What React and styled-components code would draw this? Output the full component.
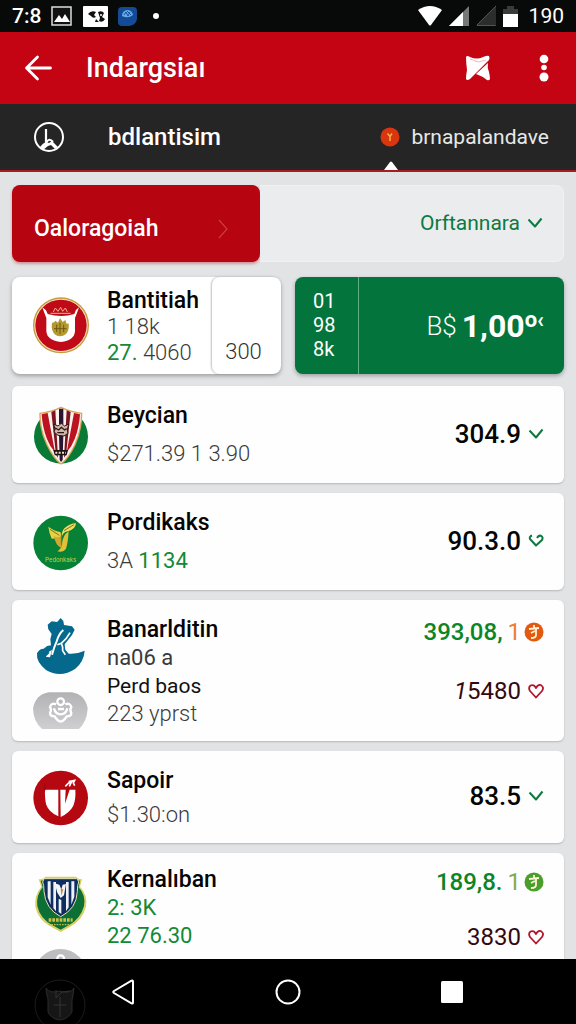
import { useState } from "react";
import styled, { createGlobalStyle } from "styled-components";

const App = () => {
  const [saved, setSaved] = useState({});

  const toggle = (key) => setSaved((prev) => ({ ...prev, [key]: !prev[key] }));

  return (
    <Screen>
      <GlobalStyle />
      <StatusBar>
        <StatusGroup>
          <Clock>7:8</Clock>
          <PictureIcon />
          <ContactIcon />
          <BadgeIcon />
          <Dot />
        </StatusGroup>
        <StatusGroup $tight>
          <WifiIcon />
          <SignalIcon />
          <SignalIcon dim />
          <BatteryIcon />
          <Clock $light>190</Clock>
        </StatusGroup>
      </StatusBar>

      <AppBar>
        <IconButton aria-label="Back">
          <BackIcon />
        </IconButton>
        <Title>Indargsiaı</Title>
        <IconButton aria-label="Pin">
          <PinIcon />
        </IconButton>
        <IconButton aria-label="More">
          <MoreIcon />
        </IconButton>
      </AppBar>

      <Tabs>
        <Tab>
          <ClockIcon />
          bdlantisim
        </Tab>
        <Tab $active>
          <CoinIcon />
          brnapalandave
          <Caret viewBox="0 0 14 9" aria-hidden="true">
            <path d="M0 9 6 1q1-1 2 0l6 8z" fill="#fff" />
          </Caret>
        </Tab>
      </Tabs>

      <Content>
        <Filters>
          <Primary>
            Oaloragoiah
            <svg width="12" height="20" viewBox="0 0 12 20" fill="none">
              <path d="M2 1l8 9-8 9" stroke="#cf3a45" strokeWidth="1.2" />
            </svg>
          </Primary>
          <SelectBox>
            <Select aria-label="Order" defaultValue="a">
              <option value="a">Orftannara</option>
            </Select>
            <CheckIcon color="#0b7a43" />
          </SelectBox>
        </Filters>

        <Highlights>
          <Summary>
            <SummaryMain>
              <CrestCrown />
              <Info>
                <Name>Bantitiah</Name>
                <Sub>1 18k</Sub>
                <Sub>
                  <Green>27.</Green> 4060
                </Sub>
              </Info>
            </SummaryMain>
            <SummarySide>300</SummarySide>
          </Summary>
          <Offer>
            <OfferSide>
              <span>01</span>
              <span>98</span>
              <span>8k</span>
            </OfferSide>
            <OfferPrice>
              <Currency>B$</Currency>
              <Amount>1,00</Amount>
              <Raised>o‹</Raised>
            </OfferPrice>
          </Offer>
        </Highlights>

        <List>
          <Card $roomy>
            <CrestStriped />
            <Info $gap={10}>
              <Name>Beycian</Name>
              <Sub>$271.39 1 3.90</Sub>
            </Info>
            <Values>
              <Value>
                304.9
                <Toggle label="Beycian" name="a" saved={saved} onToggle={toggle}>
                  <CheckIcon color="#0b7a3c" />
                </Toggle>
              </Value>
            </Values>
          </Card>

          <Card $roomy>
            <CrestLeaf />
            <Info $gap={10}>
              <Name>Pordikaks</Name>
              <Sub>
                3A <Green>1134</Green>
              </Sub>
            </Info>
            <Values>
              <Value>
                90.3.0
                <Toggle label="Pordikaks" name="b" saved={saved} onToggle={toggle}>
                  <CheckIcon color="#0b7a3c" curl />
                </Toggle>
              </Value>
            </Values>
          </Card>

          <Card>
            <Crests>
              <CrestSwan />
              <CrestGrey />
            </Crests>
            <Info>
              <Name>Banarlditin</Name>
              <Sub $dark>na06 a</Sub>
              <Second>Perd baos</Second>
              <Sub>223 yprst</Sub>
            </Info>
            <Values $top $gap={31}>
              <Value $tone="green">
                393,08, <Orange>1</Orange>
                <TokenIcon color="#e2590f" />
              </Value>
              <Value $tone="wine">
                <span>
                  <i>1</i>5480
                </span>
                <Toggle label="Perd baos" name="c" saved={saved} onToggle={toggle}>
                  <HeartIcon />
                </Toggle>
              </Value>
            </Values>
          </Card>

          <Card>
            <CrestShield />
            <Info $gap={6}>
              <Name>Sapoir</Name>
              <Sub>$1.30:on</Sub>
            </Info>
            <Values>
              <Value>
                83.5
                <Toggle label="Sapoir" name="d" saved={saved} onToggle={toggle}>
                  <CheckIcon color="#0b7a3c" />
                </Toggle>
              </Value>
            </Values>
          </Card>

          <Card $snug>
            <Crests $low>
              <CrestBlue />
              <CrestGrey round />
            </Crests>
            <Info>
              <Name>Kernalıban</Name>
              <Sub $dark>
                <Green>2: 3K</Green>
              </Sub>
              <Sub $dark>
                <Green>22 76.30</Green>
              </Sub>
            </Info>
            <Values $top $gap={27}>
              <Value $tone="green">
                189,8. <Lime>1</Lime>
                <TokenIcon color="#4a9f2c" />
              </Value>
              <Value $tone="wine">
                3830
                <Toggle label="Kernalıban" name="e" saved={saved} onToggle={toggle}>
                  <HeartIcon />
                </Toggle>
              </Value>
            </Values>
          </Card>
        </List>
      </Content>

      <NavBar>
        <Ghost viewBox="0 0 52 52" aria-hidden="true">
          <circle cx="26" cy="26" r="25" fill="none" stroke="#1c1c1c" />
          <path
            d="M12 9q4 6 14 3 9 4 14-3-1 8-2 12v12q-4 7-12 8-9-1-12-8V20q-2-5-2-11z"
            fill="#161616"
            stroke="#2b2b2b"
          />
          <path d="M22 11v8l6-6 8-1M26 18v20M20 26h12" stroke="#333" fill="none" />
        </Ghost>
        <NavButton aria-label="Back">
          <svg width="26" height="28" viewBox="0 0 26 28" fill="none">
            <path
              d="M22 3.500v21q0 1.500-1.500.8L3 15q-1.500-1 0-2L20.500 2.700q1.500-.7 1.500.8z"
              stroke="#fff"
              strokeWidth="2"
            />
          </svg>
        </NavButton>
        <NavButton aria-label="Home">
          <svg width="26" height="26" viewBox="0 0 26 26" fill="none">
            <circle cx="13" cy="13" r="11.500" stroke="#fff" strokeWidth="2" />
          </svg>
        </NavButton>
        <NavButton aria-label="Recent">
          <svg width="22" height="22" viewBox="0 0 22 22">
            <rect width="22" height="22" rx="1.500" fill="#fff" />
          </svg>
        </NavButton>
      </NavBar>
    </Screen>
  );
};

export default App;

const Toggle = ({ label, name, saved, onToggle, children }) => (
  <MarkButton
    aria-label={label}
    aria-pressed={!!saved[name]}
    onClick={() => onToggle(name)}
  >
    {children}
  </MarkButton>
);

/* icons */

const PictureIcon = () => (
  <svg width="22" height="20" viewBox="0 0 22 20">
    <rect x="1" y="1" width="19" height="18" fill="#111" stroke="#ddd" strokeWidth="1.500" />
    <path d="M3 16l5-7 3 4 3-5 5 8z" fill="#fff" />
  </svg>
);

const ContactIcon = () => (
  <svg width="25" height="21" viewBox="0 0 25 21">
    <rect width="25" height="21" rx="1" fill="#fff" />
    <path
      d="M5 8q3-4 8-2l-2 3 2 2q-3 2-5-1zM15 6q4-2 6 1l-2 4 3 2q-2 4-6 2l1-3zM13 13l3 3h-4z"
      fill="#111"
    />
    <circle cx="18" cy="9" r="1" fill="#fff" />
  </svg>
);

const BadgeIcon = () => (
  <svg width="19" height="19" viewBox="0 0 19 19">
    <path d="M4 0h11q4 0 4 4v8q-1 6-8 7H4q-4 0-4-4V4q0-4 4-4z" fill="#134b96" />
    <path d="M4 9q0-5 5-6 5 0 6 5-5 4-11 1z" fill="#68a9e6" />
    <path d="M6 8l2-3 2 4 2-4M9 4l4 4" stroke="#174f9c" fill="none" />
  </svg>
);

const WifiIcon = () => (
  <svg width="24" height="20" viewBox="0 0 24 20">
    <path d="M0 4q12-8 24 0L13 19q-1 1-2 0z" fill="#fff" />
  </svg>
);

const SignalIcon = ({ dim }) => (
  <svg width="20" height="20" viewBox="0 0 20 20">
    <path d="M0 20L20 0v20z" fill={dim ? "#2c2c2c" : "#777"} />
    {dim ? (
      <path d="M1 19.500h18.500M1 19L20 0" stroke="#555" fill="none" />
    ) : (
      <path d="M0 20L14 6v14z" fill="#fff" />
    )}
  </svg>
);

const BatteryIcon = () => (
  <svg width="15" height="21" viewBox="0 0 15 21">
    <path d="M0 3h4V0h7v3h4v6H0z" fill="#3a3a3a" />
    <path d="M0 8h15v13H0z" fill="#fff" />
  </svg>
);

const BackIcon = () => (
  <svg width="28" height="28" viewBox="0 0 28 28" fill="none">
    <path
      d="M13.500 3L2.500 14l11 11M3 14h23.500"
      stroke="#fff"
      strokeWidth="2.800"
      strokeLinecap="round"
      strokeLinejoin="round"
    />
  </svg>
);

const PinIcon = () => (
  <svg width="26" height="26" viewBox="0 0 26 26">
    <path
      d="M1 2q1-2 4 0 7 3 13 0 5-2 6-1 1 2 0 4L5 24q-3 2-4 0 0-4 1-9-1-8-1-13z"
      fill="#fff"
    />
    <path d="M23 8q-1 5 1 9 1 5 1 7-1 2-3 1-5-4-11-6z" fill="#fff" />
    <path d="M5 4l8 3 8-2" stroke="#f3b9bd" fill="none" />
  </svg>
);

const MoreIcon = () => (
  <svg width="10" height="28" viewBox="0 0 10 28" fill="#fff">
    <circle cx="5" cy="5" r="4.300" />
    <circle cx="5" cy="13.500" r="2.800" />
    <circle cx="5" cy="23" r="4.500" />
  </svg>
);

const ClockIcon = () => (
  <svg width="32" height="32" viewBox="0 0 32 32" fill="none">
    <circle cx="16" cy="16" r="14" stroke="#fff" strokeWidth="2" />
    <path d="M13 8v14q3-6 7-1" stroke="#fff" strokeWidth="2.200" />
    <path d="M7 26q3-4 6-5l3 1 3-2 6 6-3 2-4-4-3 1-5 4z" fill="#fff" />
  </svg>
);

const CoinIcon = () => (
  <svg width="20" height="20" viewBox="0 0 20 20">
    <circle cx="10" cy="10" r="9.500" fill="#d9350f" />
    <path d="M7.500 6.500l2.500 3 2-3M10 9v5" stroke="#f5b34c" strokeWidth="1.500" fill="none" />
  </svg>
);

const CheckIcon = ({ color, curl }) => (
  <svg width="16" height="14" viewBox="0 0 16 14" fill="none">
    <path
      d={
        curl
          ? "M4 1.500Q1 2.500 2 5l6 6.500L14 6q1.500-3-1-4.200Q10.500 1 9 4"
          : "M1.500 3.500L8 10.500l6.500-8"
      }
      stroke={color}
      strokeWidth="2"
      strokeLinejoin="round"
    />
  </svg>
);

const HeartIcon = () => (
  <svg width="16" height="16" viewBox="0 0 16 16" fill="none">
    <path
      d="M8 14.500L2 8Q0 4.500 2.500 2.500 6 1 8 5q2-4 5-2.800 3.500 2 1 5.800z"
      stroke="#b3142b"
      strokeWidth="1.800"
      strokeLinejoin="round"
    />
  </svg>
);

const TokenIcon = ({ color }) => (
  <svg width="20" height="20" viewBox="0 0 20 20">
    <circle cx="10" cy="10" r="9.500" fill={color} />
    <path
      d="M5 7l10-1M10 3v4M12 7v6q0 3-5 3M7 11l4-2"
      stroke="#fff3d6"
      strokeWidth="1.800"
      fill="none"
    />
  </svg>
);

/* club crests */

const CrestCrown = () => (
  <Crest viewBox="99 364 168 168">
    <circle cx="183" cy="446" r="84" fill="#c79a3d" />
    <circle cx="183" cy="446" r="80" fill="#f5e3c0" />
    <circle cx="183" cy="446" r="77" fill="#c00a18" />
    <path
      d="M127 392q14 16 56 16t54-16q-6 18-12 32v40q-2 28-42 32-42-4-44-32v-40q-6-14-12-32z"
      fill="#fff"
    />
    <path d="M134 392q20 12 49 10 27 2 48-10l-8 20q-38 12-80 0z" fill="#b50f17" />
    <path
      d="M160 406l6-12 8 10 8-12 6 12 8-10 6 12M152 410h60"
      stroke="#f0b48a"
      strokeWidth="3"
      fill="none"
    />
    <path
      d="M156 438q6 2 10-6l8 6 6-14 8 12 8-6 4 12 6-2q2 22-8 32-16 12-32 2-14-12-10-36z"
      fill="#b49a2e"
    />
    <path d="M170 444v22M180 438v34M191 444v22M162 456h38" stroke="#6f5a12" strokeWidth="3" />
  </Crest>
);

const CrestStriped = () => (
  <Crest viewBox="99 64 168 168">
    <circle cx="183" cy="150" r="81" fill="#087a35" />
    <path
      d="M120 80q34-4 63-18 29 14 62 18 0 50-20 94-20 42-42 58-22-16-42-58-22-44-21-94z"
      fill="#fbf3ec"
      stroke="#d8a55c"
      strokeWidth="4"
    />
    <path d="M125 83l18-4 22 118q-16-18-24-40-14-36-16-74z" fill="#bb1420" />
    <path d="M240 83l-18-4-22 118q16-18 24-40 14-36 16-74z" fill="#bb1420" />
    <path d="M154 76l12-5 8 142-6-8zM212 76l-12-5-8 142 6-8z" fill="#7d1220" />
    <path d="M177 66h13v46h-13zM177 146h13l-2 74-5 6-4-6z" fill="#2a1530" />
    <path
      d="M160 112l14 6 10-8 10 8 12-6-4 18 2 10-12 8-18-2-12-10 4-10z"
      fill="#cdb7a4"
      stroke="#2b1518"
      strokeWidth="3"
    />
    <path d="M166 124l10 6 8-8 10 8 6-4M172 138h20" stroke="#2b1518" strokeWidth="4" fill="none" />
    <path d="M160 190h44l-4 16h-36z" fill="#1f1114" />
    <path d="M166 198h32" stroke="#e9dccb" strokeWidth="6" strokeDasharray="6 4" />
  </Crest>
);

const CrestLeaf = () => (
  <Crest viewBox="99 387 168 168">
    <circle cx="182" cy="471" r="82" fill="#078136" />
    <path d="M145 422q20 14 36 16 6 8 2 18l-28 2q-8-18-10-36z" fill="#e8cf45" />
    <path d="M228 412q-2 18-24 24-14 2-18 14-2-14 8-24 16-14 34-14z" fill="#f0dc62" />
    <path d="M206 436q-2 34-8 52-8 12-26 8 12-6 14-22 2-26 20-38z" fill="#e2c13a" />
    <path d="M162 450q10 8 22 0v36q-18-8-22-36z" fill="#d0a92e" />
    <path d="M184 442v34M150 430l28 18M192 434l30-18" stroke="#8a7317" strokeWidth="3" />
    <text
      x="182"
      y="527"
      textAnchor="middle"
      fontFamily="Roboto, sans-serif"
      fontSize="19"
      fill="#b7cf4e"
    >
      Pedonkaks
    </text>
  </Crest>
);

const CrestSwan = () => (
  <Crest viewBox="99 72 168 168">
    <path
      d="M182 72l8 9 2 12 24 4 8 10-8 16-22 28 2 16 10 12q24 2 48-9-2 32-28 54-44 30-88 4-30-24-27-50 6-14 20-14 10-10 22-10l-2-18 4-16-10-14-2-14 12-10 16 2 4-4z"
      fill="#04698c"
    />
    <path
      d="M190 108q-14 12-20 34-8 18-14 40"
      fill="none"
      stroke="#fff"
      strokeWidth="6"
    />
    <path d="M210 116q-10 20-28 34M172 152l12-4q6 12 4 22l8 12" fill="none" stroke="#fff" strokeWidth="5" />
    <path d="M136 188q8-16 20-20l-6 22z" fill="#fff" />
    <path d="M146 174q-10 8-14 18 10 8 26 4" fill="none" stroke="#04698c" strokeWidth="7" />
  </Crest>
);

const CrestGrey = ({ round }) => (
  <GreyCrest viewBox="99 297 168 111" fill="none">
    <defs>
      <linearGradient id="ash" x1="0" y1="0" x2="0" y2="1">
        <stop offset="0" stopColor="#b2b2b4" />
        <stop offset="1" stopColor="#cfcfd1" />
      </linearGradient>
    </defs>
    {round ? (
      <circle cx="181" cy="378" r="81" fill="#bdbdbf" />
    ) : (
      <path
        d="M147 298h68q40 6 48 48-2 40-26 62H126q-26-22-27-62 8-42 48-48z"
        fill="url(#ash)"
      />
    )}
    <circle cx="182" cy="326" r="10" stroke="#fff" strokeWidth="7" />
    <path
      d="M168 334q-14-6-18 8 6 8 0 18 0 10 14 10 8 14 18 16 10-2 18-16 14 0 14-10-6-10 0-18-4-14-18-8M162 346q4 18 20 18t20-18M174 348h18"
      stroke="#fff"
      strokeWidth="7"
    />
  </GreyCrest>
);

const CrestShield = () => (
  <Crest viewBox="99 69 168 168">
    <circle cx="182" cy="153" r="82" fill="#b60811" />
    <path d="M135 128h40v80q-28-12-36-34-5-18-4-46z" fill="#fff" />
    <path d="M181 128h16l-2 42 14-42h17q2 28-6 48-10 20-38 34z" fill="#fff" />
    <path
      d="M196 118l10-10 8-2-6 12M206 104l18-4-4 8 4 8"
      stroke="#fff"
      strokeWidth="5"
      fill="none"
    />
    <path d="M135 110v20" stroke="#8d050c" strokeWidth="3" />
  </Crest>
);

const CrestBlue = () => (
  <Crest viewBox="99 76 168 168">
    <path
      d="M116 86q14 0 20-8h92q6 8 18 8l-6 22q24 26 18 60-10 40-50 62l-26 14-26-14q-42-22-50-62-4-34 18-60z"
      fill="#d9cf62"
    />
    <path
      d="M122 90q12 0 18-6h84q6 6 16 6l-4 20q22 24 16 56-10 38-46 58l-24 13-24-13q-38-20-46-58-4-32 16-56z"
      fill="#0c6f35"
    />
    <path
      d="M132 84h100l4 10q-4 8-4 28-2 52-50 76-46-24-50-76 0-20-4-28z"
      fill="#102d5f"
      stroke="#e9e2b0"
      strokeWidth="3"
    />
    <path
      d="M143 92h9v70l-9-22zM160 94h8v88l-8-10zM198 94h8v76l-8 12zM214 92h9v46l-9 24z"
      fill="#eef2f7"
    />
    <path d="M164 98l14 4 6 14 4-14 10-2-6 34-10 8-10-16z" fill="#f3f4f6" />
    <path d="M182 114l8 2-6 20z" fill="#cf8b33" />
    <path d="M176 144l8 4v42l-8-6z" fill="#eef2f7" />
    <path d="M146 208h72" stroke="#cfc043" strokeWidth="10" strokeDasharray="8 3" />
    <path d="M146 222h64" stroke="#b9b84a" strokeWidth="4" strokeDasharray="5 3" />
  </Crest>
);

/* styles */

const GlobalStyle = createGlobalStyle`
  * {
    box-sizing: border-box;
  }

  body {
    margin: 0;
    font-family: Roboto, "Liberation Sans", sans-serif;
    background-color: #000;
  }

  button,
  select {
    font-family: inherit;
    border: none;
    background: none;
    padding: 0;
    cursor: pointer;
  }

  svg {
    display: block;
    flex-shrink: 0;
  }
`;

const Screen = styled.div`
  display: flex;
  flex-direction: column;
  height: 100vh;
`;

const StatusBar = styled.div`
  display: flex;
  align-items: center;
  justify-content: space-between;
  height: 32px;
  padding: 0 12px;
  background-color: #070a09;
  flex-shrink: 0;
`;

const StatusGroup = styled.div`
  display: flex;
  align-items: center;
  gap: ${(props) => (props.$tight ? "7px" : "10px")};
`;

const Clock = styled.span`
  font-size: 21px;
  line-height: 24px;
  font-weight: ${(props) => (props.$light ? 400 : 500)};
  color: #fff;
  margin-left: ${(props) => (props.$light ? "4px" : 0)};
`;

const Dot = styled.span`
  width: 6px;
  height: 6px;
  margin-left: 6px;
  border-radius: 50%;
  background-color: #fff;
`;

const AppBar = styled.header`
  display: flex;
  align-items: center;
  gap: 48px;
  height: 72px;
  padding: 0 27px 0 24px;
  background-color: #c40412;
  flex-shrink: 0;
`;

const IconButton = styled.button`
  display: flex;
`;

const Title = styled.h1`
  flex: 1;
  margin: 0 0 0 -14px;
  font-size: 27px;
  line-height: 32px;
  font-weight: 500;
  color: #fff;
`;

const Tabs = styled.nav`
  display: flex;
  justify-content: space-between;
  height: 68px;
  padding: 0 27px 0 33px;
  background-color: #252525;
  border-bottom: 2px solid #a51c22;
  flex-shrink: 0;
`;

const Tab = styled.button`
  position: relative;
  display: flex;
  align-items: center;
  gap: ${(props) => (props.$active ? "11px" : "43px")};
  font-size: ${(props) => (props.$active ? "21px" : "24px")};
  line-height: 28px;
  font-weight: ${(props) => (props.$active ? 400 : 500)};
  color: ${(props) => (props.$active ? "#e8e8e8" : "#fff")};
`;

const Caret = styled.svg`
  position: absolute;
  left: 4px;
  bottom: 0;
  width: 14px;
  height: 9px;
`;

const Content = styled.main`
  flex: 1;
  min-height: 0;
  padding: 13px 12px 0;
  overflow-y: auto;
  scrollbar-width: none;
  background-color: #e2e3e5;
`;

const Filters = styled.div`
  display: grid;
  grid-template-columns: 9fr 11fr;
  height: 77px;
  margin-bottom: 15px;
`;

const Primary = styled.button`
  display: flex;
  align-items: center;
  justify-content: space-between;
  padding: 10px 31px 0 22px;
  border-radius: 8px;
  background-color: #b60410;
  box-shadow: 0 2px 3px rgba(160, 0, 10, 0.35);
  font-size: 23px;
  line-height: 28px;
  font-weight: 500;
  color: #fff;
`;

const SelectBox = styled.div`
  display: flex;
  align-items: center;
  justify-content: flex-end;
  gap: 7px;
  padding: 0 20px 2px 0;
  border: 1px solid #f0f1f2;
  border-left: none;
  border-radius: 0 8px 8px 0;
  background-color: #ebecee;
`;

const Select = styled.select`
  appearance: none;
  field-sizing: content;
  font-size: 21px;
  line-height: 28px;
  color: #0b7a43;
`;

const Highlights = styled.div`
  display: grid;
  grid-template-columns: 1fr 1fr;
  gap: 14px;
  margin-bottom: 12px;
`;

const Summary = styled.article`
  display: flex;
  border-radius: 8px;
  background-color: #fff;
  box-shadow: 0 2px 4px rgba(0, 0, 0, 0.3);
`;

const SummaryMain = styled.div`
  display: flex;
  align-items: center;
  gap: 18px;
  flex: 1;
  padding: 0 0 0 21px;
`;

const SummarySide = styled.div`
  display: flex;
  align-items: flex-end;
  justify-content: center;
  width: 69px;
  padding: 0 6px 8px 0;
  border-radius: 8px;
  box-shadow: -1px 0 2px rgba(0, 0, 0, 0.25);
  font-size: 22px;
  line-height: 28px;
  font-weight: 300;
  color: #333;
`;

const Offer = styled.article`
  display: flex;
  border-radius: 8px;
  background-color: #03743c;
  box-shadow: 0 2px 4px rgba(0, 0, 0, 0.3);
  color: #fff;
`;

const OfferSide = styled.div`
  display: flex;
  flex-direction: column;
  width: 64px;
  padding: 12px 0 13px 18px;
  border-right: 1px solid #5fae84;
  font-size: 20px;
  line-height: 24px;
`;

const OfferPrice = styled.div`
  display: flex;
  align-items: center;
  justify-content: flex-end;
  flex: 1;
  padding-right: 20px;
  line-height: 36px;
`;

const Currency = styled.span`
  margin-right: 5px;
  font-size: 26px;
  font-weight: 300;
`;

const Amount = styled.strong`
  font-size: 32px;
  font-weight: 700;
`;

const Raised = styled.sup`
  padding-bottom: 12px;
  font-size: 22px;
  line-height: 24px;
  font-weight: 700;
`;

const List = styled.div`
  display: flex;
  flex-direction: column;
  gap: 10px;
`;

const Card = styled.article`
  display: flex;
  align-items: center;
  gap: 18px;
  min-height: ${(props) => (props.$roomy ? "97px" : "92px")};
  padding: ${(props) => (props.$snug ? "11px" : "14px")} 20px 12px 21px;
  border-radius: 6px;
  background-color: #fefefe;
  box-shadow: 0 1px 2px rgba(0, 0, 0, 0.2);
`;

const Crests = styled.div`
  display: flex;
  flex-direction: column;
  align-self: flex-start;
  gap: ${(props) => (props.$low ? "17px" : "18px")};
  padding-top: ${(props) => (props.$low ? "12px" : "4px")};
`;

const Crest = styled.svg`
  width: 56px;
  height: 56px;
  overflow: visible;
`;

const GreyCrest = styled.svg`
  width: 56px;
  height: 37px;
`;

const Info = styled.div`
  display: flex;
  flex-direction: column;
  align-self: flex-start;
  gap: ${(props) => props.$gap || 0}px;
  white-space: nowrap;

  ${SummaryMain} & {
    padding: 11px 0 8px;
    line-height: 26px;
  }

  ${Card} & {
    padding-top: 2px;
    line-height: 28px;
  }
`;

const Name = styled.h2`
  margin: 0;
  font-size: 23px;
  line-height: inherit;
  font-weight: 500;
  color: #050505;
`;

const Second = styled.h3`
  margin: 0;
  font-size: 21px;
  line-height: inherit;
  font-weight: 400;
  color: #111;
`;

const Sub = styled.p`
  margin: 0;
  font-size: 22px;
  line-height: inherit;
  font-weight: ${(props) => (props.$dark ? 400 : 300)};
  color: #3a3a3a;
`;

const Green = styled.span`
  font-weight: 400;
  color: #128a35;
`;

const Orange = styled.span`
  margin-left: 2px;
  font-weight: 400;
  color: #e88236;
`;

const Lime = styled(Orange)`
  color: #84ab4c;
`;

const Values = styled.div`
  display: flex;
  flex-direction: column;
  align-items: flex-end;
  align-self: ${(props) => (props.$top ? "flex-start" : "center")};
  gap: ${(props) => props.$gap || 0}px;
  flex: 1;
  padding: ${(props) => (props.$top ? "4px 0 0" : "0 0 4px")};
`;

const tones = {
  green: "#0c8526",
  wine: "#35080e",
};

const Value = styled.div`
  display: flex;
  align-items: center;
  gap: ${(props) => (props.$tone === "green" ? "3px" : "7px")};
  font-size: ${(props) => (props.$tone ? "24px" : "26px")};
  line-height: 28px;
  font-weight: ${(props) => (props.$tone === "wine" ? 400 : 500)};
  color: ${(props) => tones[props.$tone] || "#050505"};
`;

const MarkButton = styled.button`
  display: flex;
`;

const NavBar = styled.footer`
  position: relative;
  display: flex;
  justify-content: space-around;
  height: 65px;
  padding: 0 42px;
  overflow: hidden;
  background-color: #000;
  flex-shrink: 0;
`;

const Ghost = styled.svg`
  position: absolute;
  left: 34px;
  top: 20px;
  width: 52px;
  height: 52px;
`;

const NavButton = styled.button`
  position: relative;
  display: flex;
  align-items: center;
  justify-content: center;
  width: 64px;
`;
